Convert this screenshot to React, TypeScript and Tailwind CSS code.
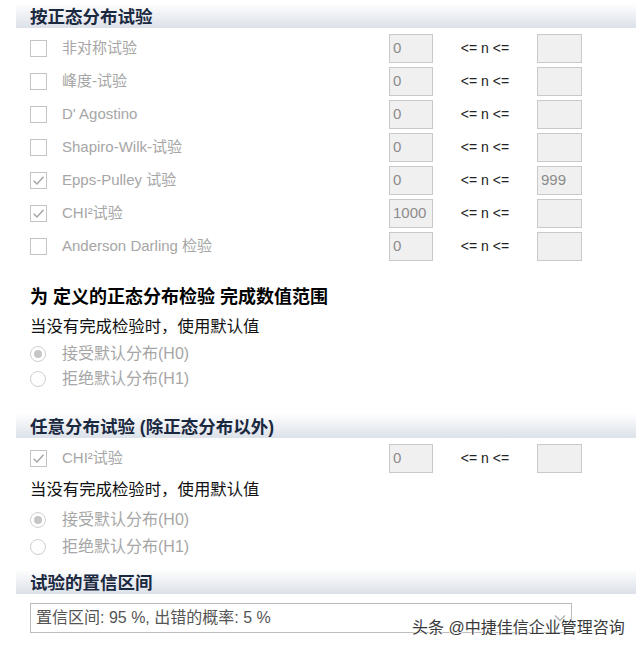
import React from "react";

const FONT = '"Liberation Sans", "Noto Sans CJK SC", sans-serif';

function Header({ title }: { title: string }) {
  return (
    <div className="ml-[16px] mr-[4px] h-[25px] flex items-end pl-[14px] bg-gradient-to-b from-white to-[#dce1e9]">
      <span className="text-[17.5px] leading-[22px] font-bold text-[#1b2940]">{title}</span>
    </div>
  );
}

function Check({ checked }: { checked: boolean }) {
  return (
    <div className="w-[17px] h-[17px] border border-[#c4c4c4] bg-white flex items-center justify-center shrink-0">
      {checked && (
        <svg width="13" height="13" viewBox="0 0 12 12">
          <path d="M1.5 6.2 L4.6 9.2 L10.6 2.6" fill="none" stroke="#a4a4a4" strokeWidth="1.3" />
        </svg>
      )}
    </div>
  );
}

function Radio({ checked }: { checked: boolean }) {
  return (
    <div className="w-[16px] h-[16px] rounded-full border border-[#cfcfcf] bg-white flex items-center justify-center shrink-0">
      {checked && <div className="w-[8px] h-[8px] rounded-full bg-[#c6c6c6]" />}
    </div>
  );
}

function Row({ label, checked, from, to }: { label: React.ReactNode; checked: boolean; from: string; to: string }) {
  return (
    <div className="h-[33px] flex items-center pl-[30px]">
      <div className="w-[359px] flex items-center">
        <Check checked={checked} />
        <span className="ml-[15px] text-[15px] text-[#a6a6a6]">{label}</span>
      </div>
      <div className="w-[44px] h-[29px] border border-[#c9c9c9] bg-[#f0f0f0] text-[15px] text-[#8c8c8c] pl-[3px] flex items-center">{from}</div>
      <div className="w-[104px] text-center text-[14px] text-[#222]">{"<= n <="}</div>
      <div className="w-[45px] h-[29px] border border-[#c9c9c9] bg-[#f0f0f0] text-[15px] text-[#8c8c8c] pl-[3px] flex items-center">{to}</div>
    </div>
  );
}

function RadioRow({ label, checked, h }: { label: string; checked: boolean; h: string }) {
  return (
    <div className={`${h} flex items-center pl-[30px]`}>
      <Radio checked={checked} />
      <span className="ml-[16px] text-[16px] text-[#a6a6a6]">{label}</span>
    </div>
  );
}

export default function App() {
  const chi = "CHI²试验";
  return (
    <div className="relative w-[640px] h-[651px] bg-white overflow-hidden" style={{ fontFamily: FONT }}>
      <div className="pt-[3px]">
        <Header title="按正态分布试验" />
        <div className="pt-[4px]">
          <Row label="非对称试验" checked={false} from="0" to="" />
          <Row label="峰度-试验" checked={false} from="0" to="" />
          <Row label="D' Agostino" checked={false} from="0" to="" />
          <Row label="Shapiro-Wilk-试验" checked={false} from="0" to="" />
          <Row label="Epps-Pulley 试验" checked={true} from="0" to="999" />
          <Row label={chi} checked={true} from="1000" to="" />
          <Row label="Anderson Darling 检验" checked={false} from="0" to="" />
        </div>
        <div className="mt-[22px] pl-[30px] h-[24px] flex items-center text-[18px] font-bold text-black">
          为 定义的正态分布检验 完成数值范围
        </div>
        <div className="mt-[4px] pl-[30px] h-[26px] flex items-center text-[16.4px] text-[#111]">当没有完成检验时，使用默认值</div>
        <RadioRow label="接受默认分布(H0)" checked={true} h="h-[25px] mt-[2px]" />
        <RadioRow label="拒绝默认分布(H1)" checked={false} h="h-[25px]" />
        <div className="mt-[22px]">
          <Header title="任意分布试验 (除正态分布以外)" />
        </div>
        <div className="mt-[4px]">
          <Row label={chi} checked={true} from="0" to="" />
        </div>
        <div className="mt-[1px] pl-[30px] h-[26px] flex items-center text-[16.4px] text-[#111]">当没有完成检验时，使用默认值</div>
        <RadioRow label="接受默认分布(H0)" checked={true} h="h-[27px] mt-[4px]" />
        <RadioRow label="拒绝默认分布(H1)" checked={false} h="h-[27px]" />
        <div className="mt-[9px]">
          <Header title="试验的置信区间" />
        </div>
        <div className="mt-[9px] ml-[30px] w-[542px] h-[30px] border border-[#bcbcbc] bg-white flex items-center justify-between pl-[5px] pr-[5px]">
          <span className="text-[16px] text-[#555]">置信区间: 95 %, 出错的概率: 5 %</span>
          <svg width="12" height="8" viewBox="0 0 12 8">
            <path d="M1 1.5 L6 6.5 L11 1.5" fill="none" stroke="#b0b0b0" strokeWidth="1.3" />
          </svg>
        </div>
      </div>
      <div
        className="absolute left-[412px] top-[617px] text-[16px] leading-[22px] text-[#3a3a3a] whitespace-nowrap"
        style={{ textShadow: "0 0 2px #fff, 0 0 2px #fff, 0 0 3px #fff" }}
      >
        头条 @中捷佳信企业管理咨询
      </div>
    </div>
  );
}
